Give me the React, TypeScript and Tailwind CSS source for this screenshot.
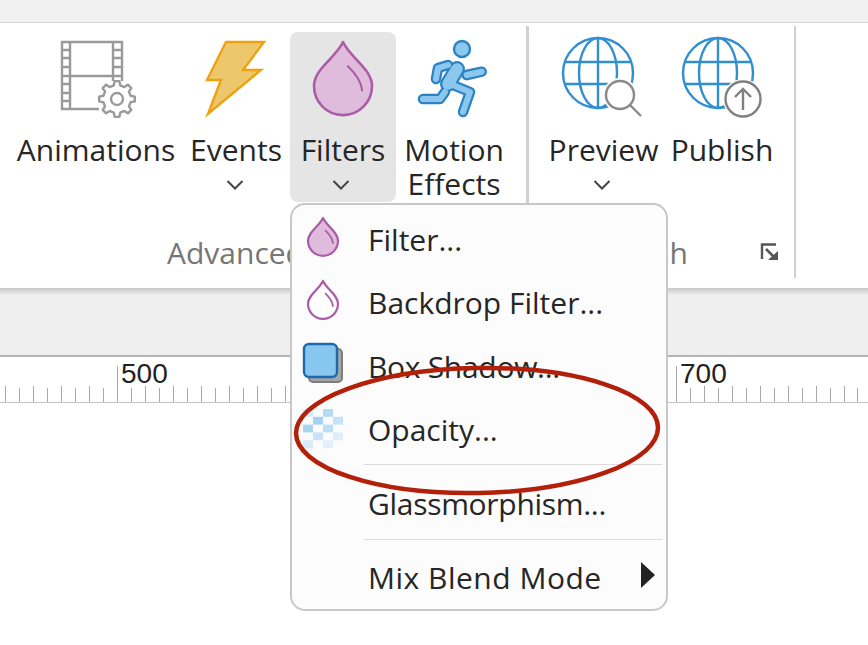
import { ReactNode } from 'react'

const gearPath = (cx: number, cy: number, outer: number, inner: number, teeth: number) => {
  const pts: string[] = []
  const step = (Math.PI * 2) / teeth
  for (let i = 0; i < teeth; i++) {
    const a = i * step - Math.PI / 2
    const spots: Array<[number, number]> = [
      [a - step * 0.3, inner],
      [a - step * 0.17, outer],
      [a + step * 0.17, outer],
      [a + step * 0.3, inner]
    ]
    spots.forEach(([ang, r]) => {
      pts.push(`${(cx + Math.cos(ang) * r).toFixed(2)} ${(cy + Math.sin(ang) * r).toFixed(2)}`)
    })
  }
  return `M${pts.join('L')}Z`
}

const Chevron = ({ className }: { className: string }) => (
  <svg width="18" height="10" viewBox="0 0 18 10" className={`block ${className}`}>
    <path d="M1.5 1 L9 8.5 L16.5 1" fill="none" stroke="#444444" strokeWidth="2" />
  </svg>
)

const Drop = ({ cx, top, r, fill, stroke, width }: { cx: number, top: number, r: number, fill: string, stroke: string, width: number }) => {
  const cy = top + r * 1.52
  return (
    <>
      <path
        d={`M${cx} ${top} C${cx + r * 0.25} ${top + r * 0.55} ${cx + r} ${cy - r * 0.6} ${cx + r} ${cy} A${r} ${r} 0 0 1 ${cx - r} ${cy} C${cx - r} ${cy - r * 0.6} ${cx - r * 0.25} ${top + r * 0.55} ${cx} ${top}Z`}
        fill={fill}
        stroke={stroke}
        strokeWidth={width}
        strokeLinejoin="round"
      />
      <path
        d={`M${cx + r * 0.17} ${cy - r * 0.68} Q${cx + r * 0.62} ${cy - r * 0.25} ${cx + r * 0.66} ${cy + r * 0.15}`}
        fill="none"
        stroke={stroke}
        strokeWidth={width * 0.8}
        strokeLinecap="round"
      />
    </>
  )
}

const Globe = ({ cx }: { cx: number }) => (
  <g fill="none" stroke="#2f8fd0" strokeWidth="2.4">
    <circle cx={cx} cy="73" r="35" />
    <ellipse cx={cx} cy="73" rx="19" ry="35" />
    <path d={`M${cx} 38V108M${cx - 33} 62H${cx + 33}M${cx - 33} 84H${cx + 33}`} />
  </g>
)

const RibbonButton = ({ className, label, chevron, active, children }: { className: string, label: ReactNode, chevron?: string, active?: boolean, children: ReactNode }) => (
  <div className={`${className} flex flex-col items-center h-[170px] rounded-lg ${active === true ? 'bg-[#e5e5e5]' : ''}`}>
    <div className="h-[101px] w-full shrink-0">{children}</div>
    <div className="text-center whitespace-nowrap">{label}</div>
    {chevron !== undefined && <div className="mt-[13px]"><Chevron className={chevron} /></div>}
  </div>
)

const MenuItem = ({ label, className, icon, arrow }: { label: string, className: string, icon?: ReactNode, arrow?: boolean }) => (
  <div className={`flex items-center ${className}`}>
    <div className="w-[76px] h-full shrink-0">{icon}</div>
    <span className="whitespace-nowrap">{label}</span>
    {arrow === true && (
      <svg width="16" height="28" viewBox="0 0 16 28" className="ml-[38px] -mt-[6px]">
        <path d="M1 1 L15 14 L1 27Z" fill="#222222" />
      </svg>
    )}
  </div>
)

const checker: Array<[number, number, string]> = [
  [0, 0, '#d4e9f8'], [2, 0, '#b4daf4'],
  [1, 1, '#a5d2f2'], [3, 1, '#c6e2f6'],
  [0, 2, '#a9d4f2'], [2, 2, '#bcdef5'],
  [1, 3, '#c8e3f7'], [3, 3, '#dceefa'],
  [0, 4, '#d8ecfa'], [2, 4, '#e3f1fb']
]

const ticks = Array.from({ length: 62 }, (_, i) => i)

const runnerLimbs = 'M448 65L438 68L436 79M466.7 75L481.7 71.7M448 83L470 92L463 112M445 92L440 99L423 99'

export default function App () {
  return (
    <div
      className="relative w-[868px] h-[645px] overflow-hidden bg-white text-[#262626] text-[30px] leading-[34px]"
      style={{ fontFamily: '"Open Sans", "Noto Sans", sans-serif' }}
    >
      <div className="h-[23px] bg-[#f0f0f0] border-b border-[#d6d6d6]" />

      {/* ribbon */}
      <div className="flex h-[265px] bg-white pt-[3px]">
        <div className="w-[526px] shrink-0 flex flex-col">
          <div className="flex pl-[10px] pt-[6px]">
            <RibbonButton className="w-[172px]" label="Animations">
              <svg width="172" height="101" viewBox="10 32 172 101" className="block">
                <g fill="none" stroke="#9a9a9a" strokeWidth="2.4">
                  <path d="M99 109H62V42H122V81" />
                  <path d="M70 42V109M113 42V81M70 76H113" />
                  <path d="M62 50H70M62 58H70M62 67H70M62 76H70M62 84H70M62 93H70M62 101H70M113 50H122M113 58H122M113 67H122M113 76H122" />
                  <path d={gearPath(117, 99, 18, 14, 8)} strokeLinejoin="round" />
                  <circle cx="117" cy="99" r="6" />
                </g>
              </svg>
            </RibbonButton>
            <RibbonButton className="w-[108px]" label="Events" chevron="mr-[2px]">
              <svg width="108" height="101" viewBox="182 32 108 101" className="block">
                <path d="M226 42H264L243 70H261L208 114L221 80H207Z" fill="#edc76c" stroke="#eea20f" strokeWidth="2.4" strokeLinejoin="miter" />
              </svg>
            </RibbonButton>
            <RibbonButton className="w-[106px]" label="Filters" chevron="mr-[4px]" active>
              <svg width="106" height="101" viewBox="290 32 106 101" className="block">
                <Drop cx={343} top={42} r={29} fill="#e0bcdc" stroke="#ab5ca8" width={2.6} />
              </svg>
            </RibbonButton>
            <RibbonButton className="w-[116px]" label={<>Motion<br />Effects</>}>
              <svg width="116" height="101" viewBox="396 32 116 101" className="block">
                <g fill="none" strokeLinecap="round" strokeLinejoin="round">
                  <path d={runnerLimbs} stroke="#2b83c4" strokeWidth="10.5" />
                  <path d="M457 69L448 84" stroke="#2b83c4" strokeWidth="16" />
                  <path d={runnerLimbs} stroke="#8cc8ee" strokeWidth="6" />
                  <path d="M457 69L448 84" stroke="#8cc8ee" strokeWidth="11.5" />
                </g>
                <circle cx="462" cy="49" r="8" fill="#8cc8ee" stroke="#2b83c4" strokeWidth="2.4" />
              </svg>
            </RibbonButton>
          </div>
          <div className="mt-[34px] ml-[167px] text-[#767676] whitespace-nowrap">Advanced</div>
        </div>
        <div className="w-[3px] h-[252px] shrink-0 bg-[#d0d0d0]" />
        <div className="w-[265px] shrink-0 relative flex flex-col">
          <div className="flex pl-[16px] pt-[6px]">
            <RibbonButton className="w-[117px]" label="Preview" chevron="mr-[4px]">
              <svg width="117" height="101" viewBox="545 32 117 101" className="block">
                <Globe cx={598} />
                <circle cx="620" cy="95" r="17" fill="#ffffff" />
                <circle cx="620" cy="95" r="14" fill="#ffffff" stroke="#8a8a8a" strokeWidth="2.4" />
                <path d="M630 105L641 116" stroke="#8a8a8a" strokeWidth="2.4" />
              </svg>
            </RibbonButton>
            <RibbonButton className="w-[120px]" label="Publish">
              <svg width="120" height="101" viewBox="662 32 120 101" className="block">
                <Globe cx={718} />
                <circle cx="743" cy="99" r="20" fill="#ffffff" />
                <circle cx="743" cy="99" r="17.5" fill="#ffffff" stroke="#808080" strokeWidth="2.4" />
                <path d="M743 110V89M735 97L743 89L751 97" fill="none" stroke="#808080" strokeWidth="2.4" />
              </svg>
            </RibbonButton>
          </div>
          <div className="mt-[34px] pr-[50px] text-center text-[#767676]">Publish</div>
          <svg width="21" height="20" viewBox="0 0 21 20" className="absolute left-[231px] top-[217px]">
            <path d="M16 1.5H2V16" fill="none" stroke="#555555" strokeWidth="2.4" />
            <path d="M6 6L14 14" stroke="#555555" strokeWidth="2.6" />
            <path d="M8 17H18V8Z" fill="#555555" />
          </svg>
        </div>
        <div className="w-[2px] h-[252px] shrink-0 bg-[#d0d0d0]" />
      </div>

      {/* canvas header */}
      <div className="h-[69px] border-b-2 border-[#b4b4b4] bg-gradient-to-b from-[#c8c8c8] from-0% to-[#efefef] to-[11%]" />

      {/* ruler */}
      <div className="relative h-[46px] bg-white border-b border-[#c4c4c4]">
        <svg width="868" height="46" viewBox="0 0 868 46" className="block">
          {ticks.map((i) => {
            const x = Math.round(5 + i * 13.975) + 0.5
            const long = i === 8 || i === 48
            return <line key={i} x1={x} x2={x} y1={long ? 9 : i % 2 === 0 ? 29 : 31} y2="45" stroke="#a8a8a8" strokeWidth="1" />
          })}
        </svg>
        <span className="absolute left-[121px] top-0 leading-[34px] text-[28px] text-[#222222]" style={{ fontFamily: '"Liberation Sans", sans-serif' }}>500</span>
        <span className="absolute left-[680px] top-0 leading-[34px] text-[28px] text-[#222222]" style={{ fontFamily: '"Liberation Sans", sans-serif' }}>700</span>
      </div>

      {/* dropdown */}
      <div className="absolute left-[290px] top-[203px] w-[378px] h-[408px] rounded-[15px] border-2 border-[#c8c8c8] bg-[#fcfcfc] pt-[3px]">
        <MenuItem
          className="h-[64px]"
          label="Filter..."
          icon={(
            <svg width="76" height="64" viewBox="292 208 76 64" className="block">
              <Drop cx={323} top={218} r={15} fill="#e0bcdc" stroke="#ab5ca8" width={2.2} />
            </svg>
          )}
        />
        <MenuItem
          className="h-[62px]"
          label="Backdrop Filter..."
          icon={(
            <svg width="76" height="62" viewBox="292 272 76 62" className="block">
              <Drop cx={323} top={281} r={15} fill="#ffffff" stroke="#ab5ca8" width={2.2} />
            </svg>
          )}
        />
        <MenuItem
          className="h-[65px] tracking-[-0.3px]"
          label="Box Shadow..."
          icon={(
            <svg width="76" height="65" viewBox="292 334 76 65" className="block">
              <rect x="309" y="349" width="33" height="33" rx="4" fill="#a6a6a6" stroke="#7d7d7d" strokeWidth="2" />
              <rect x="304" y="344" width="33" height="33" rx="5" fill="#87c7ed" stroke="#1c6aae" strokeWidth="2.4" />
            </svg>
          )}
        />
        <MenuItem
          className="h-[62px]"
          label="Opacity..."
          icon={(
            <svg width="76" height="62" viewBox="292 399 76 62" className="block">
              {checker.map(([c, r, fill]) => (
                <rect key={`${c}-${r}`} x={303 + c * 10} y={409 + r * 7.8} width="10" height="7.8" fill={fill} />
              ))}
            </svg>
          )}
        />
        <div className="h-px mt-[3px] ml-[72px] mr-[4px] bg-[#dcdcdc]" />
        <MenuItem className="h-[74px] pt-[4px] tracking-[-0.3px]" label="Glassmorphism..." />
        <div className="h-px ml-[72px] mr-[4px] bg-[#dcdcdc]" />
        <MenuItem className="h-[69px] pt-[7px] tracking-[0.5px]" label="Mix Blend Mode" arrow />
      </div>

      {/* hand drawn marker */}
      <svg width="868" height="645" viewBox="0 0 868 645" className="absolute left-0 top-0 pointer-events-none">
        <ellipse cx="477" cy="430.5" rx="181" ry="62.5" transform="rotate(-1 477 430)" fill="none" stroke="#b3200a" strokeWidth="4.5" />
      </svg>
    </div>
  )
}
